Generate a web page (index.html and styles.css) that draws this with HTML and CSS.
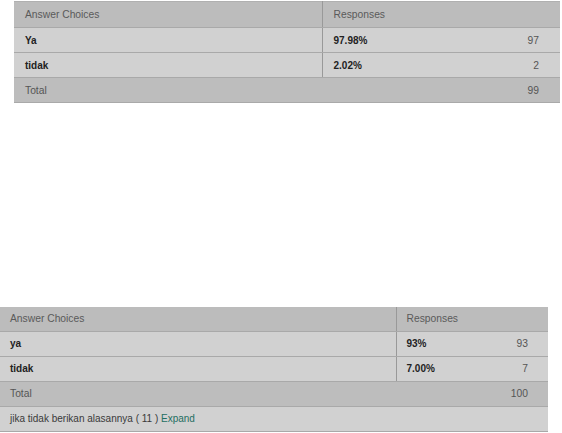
FILE: index.html
```html
<!DOCTYPE html>
<html>
<head>
    <title>Survey Results</title>
    <link rel="stylesheet" href="styles.css">
</head>
<body>
    <!-- Pertanyaan 1 -->
    <table class="results first">
        <colgroup>
            <col class="col-choice">
            <col class="col-pct">
            <col class="col-count">
        </colgroup>
        <tr class="head">
            <th class="divider">Answer Choices</th>
            <th colspan="2">Responses</th>
        </tr>
        <tr class="row">
            <td class="choice divider">Ya</td>
            <td class="pct">97.98%</td>
            <td class="count">97</td>
        </tr>
        <tr class="row">
            <td class="choice divider">tidak</td>
            <td class="pct">2.02%</td>
            <td class="count">2</td>
        </tr>
        <tr class="total">
            <td colspan="2">Total</td>
            <td class="count">99</td>
        </tr>
    </table>

    <!-- Pertanyaan 2 -->
    <table class="results second">
        <colgroup>
            <col class="col-choice">
            <col class="col-pct">
            <col class="col-count">
        </colgroup>
        <tr class="head">
            <th class="divider">Answer Choices</th>
            <th colspan="2">Responses</th>
        </tr>
        <tr class="row">
            <td class="choice divider">ya</td>
            <td class="pct">93%</td>
            <td class="count">93</td>
        </tr>
        <tr class="row">
            <td class="choice divider">tidak</td>
            <td class="pct">7.00%</td>
            <td class="count">7</td>
        </tr>
        <tr class="total">
            <td colspan="2">Total</td>
            <td class="count">100</td>
        </tr>
        <tr class="other">
            <td colspan="3">jika tidak berikan alasannya ( 11 ) <a href="#" class="expand">Expand</a></td>
        </tr>
    </table>
</body>
</html>
```

FILE: styles.css
```css
body { margin: 0; font-family: "Liberation Sans", Arial, sans-serif; font-size: 10.3px; background: #fff; }
.results { border-collapse: collapse; table-layout: fixed; }
.results th, .results td { padding: 0 0 0 11px; text-align: left; white-space: nowrap; border-bottom: 1px solid #a9a9a9; }
.results th { font-weight: normal; color: #5a5a5a; }
.first { width: 546px; margin: 1px 0 0 14px; border-top: 1px solid #b0b0b0; }
.first .col-choice { width: 308px; }
.first .col-count { width: 60px; }
.second { width: 548px; margin: 204px 0 0 0; }
.second .col-choice { width: 396px; }
.second .col-count { width: 60px; }
.second th, .second td { padding-left: 10px; }
.head { background: #bcbcbc; height: 26px; }
.second .head { height: 24px; }
.row { background: #d1d1d1; height: 25px; }
.total { background: #bdbdbd; height: 25px; color: #555; }
.other { background: #d1d1d1; height: 25px; color: #3a3a3a; font-size: 10px; }
.divider { border-right: 1px solid #999; }
.choice, .pct { font-weight: bold; font-size: 10px; color: #222; }
.results .count { text-align: right; padding-right: 21px; color: #555; }
.second .count { padding-right: 20px; }
.expand { color: #1f6f62; text-decoration: none; }
```
